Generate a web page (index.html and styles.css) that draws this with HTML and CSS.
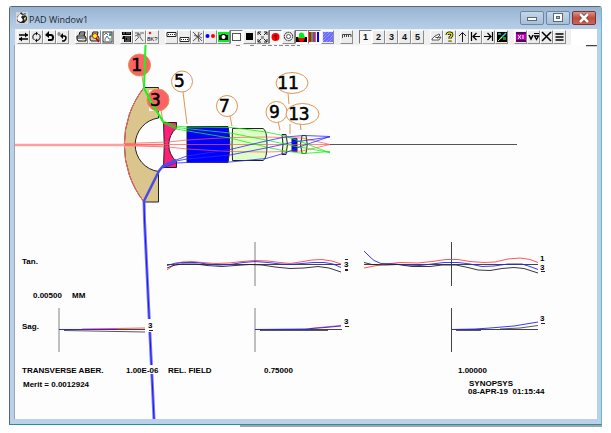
FILE: index.html
```html
<!DOCTYPE html>
<html lang="en">
<head>
<meta charset="utf-8">
<title>PAD Window1</title>
<link rel="stylesheet" href="styles.css">
</head>
<body>
<main class="window">
<header class="titlebar">
  <svg class="app-icon" viewBox="0 0 12 12" aria-hidden="true"><rect width="12" height="12" fill="#d4d4d4"/><path d="M1 5 4 2 5 0 7 2 10 1 9 3 11 5 11 8 8 11 4 11 1 9Z" fill="#222"/><path d="M1 6 4 2 7 3 5 5 7 8 5 10 2 9ZM7 3 9 2 8 4ZM8 6 10 5 9 9Z" fill="#fff"/></svg>
  <h1 class="title">PAD Window1</h1>
  <div class="controls">
    <button class="control" aria-label="Minimize"><svg viewBox="0 0 12 10"><rect x="1.500" y="4.500" width="9" height="3" fill="#fff" stroke="#59697a"/></svg></button>
    <button class="control" aria-label="Maximize"><svg viewBox="0 0 12 10"><rect x="1.500" y=".5" width="9" height="8" fill="#fff" stroke="#59697a"/><rect x="4.500" y="3.500" width="3" height="2" fill="#9bb5d0" stroke="#59697a"/></svg></button>
    <button class="control close" aria-label="Close"><svg viewBox="0 0 12 10"><path d="m2 1 8 8m0-8-8 8" stroke="#713b3b" stroke-width="4"/><path d="m2 1 8 8m0-8-8 8" stroke="#fff" stroke-width="2.500"/></svg></button>
  </div>
</header>
<nav class="toolbar" aria-label="Tools">
  <div class="group">
    <button class="tool" aria-label="Swap"><svg viewBox="0 0 11 12"><path d="M1 4h9M1 8h9" stroke="#000" stroke-width="1.500"/><path d="m7 1.500 3 2.500-3 2.500ZM4 5.500 1 8l3 2.500Z"/></svg></button>
    <button class="tool" aria-label="Refresh"><svg viewBox="0 0 11 12"><path d="M3.500 9A3.500 3.500 0 0 1 5 2.500M7.500 3A3.500 3.500 0 0 1 6 9.500" fill="none" stroke="#000"/><path d="m5 .5 2 2-2 2ZM6 7.500l-2 2 2 2Z"/></svg></button>
    <button class="tool" aria-label="Undo"><svg viewBox="0 0 11 12"><path d="M3 4h4q2 0 2 2.500T7 9H4" fill="none" stroke="#000" stroke-width="2"/><path d="M5 0v7L1 4Z"/></svg></button>
    <button class="tool" aria-label="Undo all"><svg viewBox="0 0 11 12"><path d="M5 5h2q2 0 2 2T7 10H5" fill="none" stroke="#000" stroke-width="1.500"/><path d="M6 2v6L3 5Z"/><ellipse cx="2" cy="3" rx="1" ry="1.500" fill="none" stroke="#333" stroke-width=".7"/></svg></button>
  </div>
  <div class="group">
    <button class="tool" aria-label="Print"><svg viewBox="0 0 11 12"><path d="m3 4 1-3h5L8 5M1 5h8l1 2v3H2L1 8Z" fill="#eee" stroke="#000"/><path d="M1 7h9M4 3h4" stroke="#222"/><path d="M6 9h2" stroke="#d8c800"/></svg></button>
    <button class="tool" aria-label="Print preview"><svg viewBox="0 0 11 12"><path d="m3 4 1-3h5L8 5M1 5h8l1 2v3H2L1 8Z" fill="#ccc" stroke="#222"/><circle cx="6" cy="5" r="2.500" fill="#ff0" stroke="#a00" stroke-width=".8"/><path d="m7 7 3 4" stroke="#b00" stroke-width="1.500"/></svg></button>
    <button class="tool" aria-label="Copy picture"><svg viewBox="0 0 11 12"><rect x="1" y="1" width="9" height="10" fill="#fff" stroke="#333"/><path d="m2 4 2-2 2 2M3 8l2-3 2 3M7 2h2v3M8 7v3M2 9h2" fill="none" stroke="#345" stroke-width=".8"/><path d="M7 3h2v2H7Z" fill="#299"/></svg></button>
  </div>
  <div class="group">
    <button class="tool" aria-label="Lens data"><svg viewBox="0 0 11 12"><path d="M1 1h9v3H1ZM2 5h8v6H3V8H1Z"/><path d="M2 2h2m1 0h4M4 6h5M4 8h1m1 0h3M4 10h5" stroke="#ccc" stroke-width=".7"/></svg></button>
    <button class="tool" aria-label="Ray fan"><svg viewBox="0 0 11 12"><path d="M1 2h4m1 0h4M4 2v4M1 5l5-2v3l3 4M1 10l4-4" fill="none" stroke="#444" stroke-width=".8"/></svg></button>
    <button class="tool" aria-label="Bitmap OK"><svg viewBox="0 0 11 12"><circle cx="3" cy="2" r="1.300" fill="#e22"/><text class="tiny" x="0" y="10">8K?</text></svg></button>
  </div>
  <div class="group">
    <button class="tool" aria-label="Top layout"><svg viewBox="0 0 11 12"><path d="M1 1.500h9v4H1ZM4 3.500h1m1 0h1m1 0h1M2 3.500h1" fill="#fff" stroke="#222"/></svg></button>
    <button class="tool" aria-label="Bottom layout"><svg viewBox="0 0 11 12"><path d="M1 6.500h9v4H1ZM4 8.500h1m1 0h1m1 0h1M2 8.500h1" fill="#fff" stroke="#222"/></svg></button>
    <button class="tool" aria-label="Trace rays"><svg viewBox="0 0 11 12"><path d="m1 1 9 9M1 10l9-8M2 4l4 2 1 5M7 1 6 5l4 2" fill="none" stroke="#333" stroke-width=".8"/></svg></button>
    <button class="tool" aria-label="Field points"><svg viewBox="0 0 11 12"><circle cx="2.500" cy="5" r="2" fill="#00f"/><circle cx="8" cy="5" r="2" fill="#f00"/></svg></button>
    <button class="tool" aria-label="Snapshot"><svg viewBox="0 0 11 12"><path fill="#0e2" d="M0 1h11v10H0z"/><path d="M1 4h2l1-1h3l1 1h2v5H1Z"/><circle cx="5.500" cy="6" r="2" fill="#fff"/></svg></button>
    <button class="tool pressed" aria-label="White background"><svg viewBox="0 0 11 12"><rect x="1.500" y="2.500" width="8" height="7" fill="#fff" stroke="#555"/></svg></button>
    <button class="tool" aria-label="Black background"><svg viewBox="0 0 11 12"><path d="M2 2h7v7H2z"/></svg></button>
    <button class="tool" aria-label="Zoom to fit"><svg viewBox="0 0 11 12"><path d="M1 4V1h3m3 0h3v3m0 4v3H7m-3 0H1V8M1 1l3 3m6-3L7 4m3 7L7 8m-6 3 3-3" fill="none" stroke="#222"/><path d="M4 5h3v3H4z" fill="#999"/></svg></button>
    <button class="tool pressed" aria-label="Number surfaces"><svg viewBox="0 0 11 12"><circle cx="5.500" cy="6" r="4" fill="#f00"/><path d="m4 5 2-1v5" fill="none" stroke="#400"/></svg></button>
    <button class="tool" aria-label="Aperture"><svg viewBox="0 0 11 12"><circle cx="5.500" cy="5.500" r="4.200" fill="#eee" stroke="#222" stroke-dasharray="2 .6"/><circle cx="5.500" cy="5.500" r="2" fill="#fff" stroke="#333" stroke-width=".8"/></svg></button>
    <button class="tool pressed" aria-label="Fill lenses"><svg viewBox="0 0 11 12"><path d="M0 6h11v5H0Z"/><path d="M3 6V4a2.500 2.500 0 0 1 5 0l1 2v1H2V6Z" fill="#0e1"/><path d="M2 7h7q-1 4-3.500 4T2 7Z" fill="#f00"/></svg></button>
    <button class="tool pressed" aria-label="Colors"><svg viewBox="0 0 11 12"><path fill="#f00" d="M0 1h2v10H0z"/><path fill="#0c2" d="M2 1h2v10H2z"/><path fill="#e0e" d="M4 1h2v10H4z"/><path fill="#883" d="M6 1h1v10H6z"/><path fill="#00f" d="M8 1h2v10H8z"/></svg></button>
    <button class="tool" aria-label="Spectrum"><svg viewBox="0 0 11 12"><path fill="#6d6bff" d="M1 1h10v10H1z"/><path d="m1 4 3-3m-3 6 6-6M1 10l9-9M4 11l7-7m-4 7 4-4" stroke="#b2b6ff" stroke-dasharray="1 .8"/></svg></button>
  </div>
  <div class="group">
    <button class="tool" aria-label="Ruler"><svg viewBox="0 0 11 12"><path d="M1.500 7V3.500H10V6M3.500 4v2m2-2v2m2-2v2" fill="none" stroke="#333" stroke-width=".9"/></svg></button>
  </div>
  <div class="group">
    <button class="tool pressed">1</button>
    <button class="tool">2</button>
    <button class="tool">3</button>
    <button class="tool">4</button>
    <button class="tool">5</button>
  </div>
  <div class="group">
    <button class="tool" aria-label="Edit"><svg viewBox="0 0 11 12"><path d="m1 8 3-3 4-2 1 1-3 3 4-1-2 3H1Zm3-2 3 1" fill="#fff" stroke="#333" stroke-width=".8"/></svg></button>
    <button class="tool" aria-label="Help"><svg viewBox="0 0 11 12"><path d="M3 4q0-2 2.500-2T8 4q0 1-2 2.500V8M6 9.500V11" fill="none" stroke="#000" stroke-width="2.800"/><path d="M3 4q0-2 2.500-2T8 4q0 1-2 2.500V8M6 9.500V11" fill="none" stroke="#ee0" stroke-width="1.300"/></svg></button>
    <button class="tool" aria-label="Up"><svg viewBox="0 0 11 12"><path d="M5.500 11V2M2 5l3.500-3.500L9 5" fill="none" stroke="#000" stroke-width=".9"/></svg></button>
    <button class="tool" aria-label="First"><svg viewBox="0 0 11 12"><path d="M1.500 1v9M3 5.500h7M6.500 2 3 5.500 6.500 9" fill="none" stroke="#000" stroke-width="1.200"/></svg></button>
    <button class="tool" aria-label="Last"><svg viewBox="0 0 11 12"><path d="M9.500 1v9M1 5.500h7M4.500 2 8 5.500 4.500 9" fill="none" stroke="#000" stroke-width="1.200"/></svg></button>
    <button class="tool" aria-label="Image analysis"><svg viewBox="0 0 11 12"><path d="M1 1h10v10H1z"/><path d="m4 8 6-6M2 3h3" fill="none" stroke="#0dc" stroke-width="1.500"/><path d="m2 10 4-4" stroke="#fd0"/><path d="M7 6h3v3H7z" fill="#282"/></svg></button>
  </div>
  <div class="group">
    <button class="tool" aria-label="XI view"><svg viewBox="0 0 11 12"><path fill="#b000b0" d="M1 1h10v10H1z"/><path d="M1 2h10M1 10h10" stroke="#000"/><path d="m3 4 3 4m0-4L3 8m5-4v4" stroke="#fff"/></svg></button>
    <button class="tool" aria-label="Variables"><svg viewBox="0 0 11 12"><path d="m1 4 2 4 2-4" fill="none" stroke="#000" stroke-width="1.500"/><path d="M6 2.500h5" stroke="#000"/><path d="m6.500 5 2 3.500 2-3.500Z" fill="none" stroke="#000" stroke-width="1.300"/></svg></button>
    <button class="tool" aria-label="Clear"><svg viewBox="0 0 11 12"><path d="m1 1 9 9m0-9-9 9" stroke="#000" stroke-width="1.500"/></svg></button>
    <button class="tool" aria-label="Menu"><svg viewBox="0 0 11 12"><path d="M1.500 3h8m-8 3h8m-8 3h8" stroke="#000" stroke-width="1.300"/></svg></button>
  </div>
</nav>
<section class="canvas">
<svg class="plot" viewBox="15 45 582 374" role="img" aria-label="Lens drawing and ray aberration plots">
  <path d="M586 45.500h11" stroke="#444" stroke-width="1.500"/>
  <path d="M236 45.500h4m10 0h4m8 0h4m2 0h4m2 0h3m2 0h4m2 0h4m2 0h4m2 0h3" stroke="#888"/>
  <!-- glass elements -->
  <g stroke="#222" stroke-width="1">
    <path d="M144 87.500h14.500V118A27 27 0 0 0 158.500 171.500V202H144A93 93 0 0 1 144 87.500Z" fill="#dac58c"/>
    <path d="M144 87.500A93 93 0 0 0 144 202" fill="none" stroke="#f66"/>
    <path d="M163.500 122.500h13V128A22 22 0 0 0 176.500 161.500V167.500h-13Q165 145 163.500 122.500Z" fill="#ff1e78"/>
    <path d="M187 126.500h41Q231.500 144 228 162.500h-41Z" fill="#00f"/>
    <path d="M232.500 128.500H263Q267 130 267 144.500T263 160.500H232.500Q231.500 144 232.500 128.500Z" fill="#e0ffc8"/>
    <path d="M282 134.500h4Q289 144 286 154.500h-4Q284 144 282 134.500Z" fill="#e0ffc8"/>
    <path d="M292 138.500h5v13h-5Z" fill="#00f"/>
    <path d="M302 135.500h4Q308.500 144 306 153.500h-4Q299 144 302 135.500Z" fill="#e0ffc8"/>
  </g>
  <path d="M330 144.500h187" stroke="#555"/>
  <rect x="149" y="90" width="9" height="21" fill="#fff"/>
  <!-- leader lines and balloons -->
  <g fill="#fff" stroke="#dc9653">
    <path d="m142 76 2 12m17 22 2 12m20-30 4 32m43-8 2 10m56-33 1 11m1 20v10m-12-13 2 9m20-8 1 8"/>
    <circle cx="139.500" cy="65" r="11" fill="#ff6262"/>
    <circle cx="158" cy="100" r="11" fill="#ff6262"/>
    <circle cx="182" cy="81.500" r="10.500"/>
    <circle cx="227" cy="106" r="10.500"/>
    <circle cx="276.500" cy="112" r="10.500"/>
    <ellipse cx="292" cy="83" rx="16" ry="10.500"/>
    <ellipse cx="302.500" cy="114" rx="16.500" ry="10.500"/>
  </g>
  <!-- axial rays -->
  <path d="M15 145h148" stroke="#ffa0a0" stroke-width="2.500"/>
  <g fill="none" stroke="#ff5252" stroke-width=".7">
    <path d="M125 144.500h205M125 143.500 168 142 187 140 230 137.500 266 137 302 138 330 144.500M125 145.500 168 147 187 149 230 151.500 266 152 302 151 330 144.500"/>
  </g>
  <!-- upper field rays -->
  <g fill="none" stroke="#16f016" stroke-width=".8">
    <path d="M144 88 163 121 176 126 187 127 232 127.500 266 132 285 136 302 142 330 153M144 88 163 122 176 127.500 230 133 266 140 294 146 330 152.500M144 88 163 123 176 129 230 138 266 147 285 151 304 153.500 330 151.500"/>
  </g>
  <path d="M145.500 45 144 88l8 16 11 17" fill="none" stroke="#20f020" stroke-width="2"/>
  <!-- lower field rays -->
  <g fill="none" stroke="#2929ff" stroke-width=".8">
    <path d="M163 168 176 163 187 162.500 230 162 266 158.500 285 153 302 146 330 136.500M163 167 176 161 187 159 230 155 266 148 294 142 330 137M163 166 176 160 187 156 230 149.500 266 141 285 137 304 135.500 330 136.500"/>
  </g>
  <path d="m144 201 .5 19L154 419" fill="none" stroke="#7676ff" stroke-width="3"/>
  <path d="m144 201 .5 19L154 419" fill="none" stroke="#1616ef" stroke-width="1"/>
  <path d="m144 201 15-30 4-5 13-6" fill="none" stroke="#4b4be8" stroke-width="2.500"/>
  <path d="M146 319h9v13h-9Zm0 46h14v9h-14Z" fill="#fdfdfd"/>
  <g class="balloon">
    <text x="131" y="71">1</text><text x="150" y="106">3</text><text x="174" y="87">5</text>
    <text x="219" y="112">7</text><text x="269" y="118">9</text><text x="277" y="89">11</text><text x="288" y="120">13</text>
  </g>
  <!-- plot axes -->
  <g stroke="#aaa" stroke-width="1.500"><path d="M59 308v44M255 242v44M255 308v44"/></g>
  <path d="M451.500 242v44m0 22v44M167 264.500h174M364 264.500h174M59 329.500h86m110 0h87m109.500 0H538" stroke="#444"/>
  <!-- tangential and sagittal fans -->
  <g fill="none" stroke-width=".9">
    <path d="M167 270 171 267 176 264 182 262 192 261.500 202 262.500 215 263.500 229 263 242 261.500 255 260.500 268 261 280 262.500 290 263.500 300 262 312 260 322 259.500 332 261 341 264" stroke="#f44"/>
    <path d="M167 265.500 176 263 185 262.500 196 262.500 207 264 218 265 230 264.500 243 262.500 255 261.500 268 262.500 280 264 290 264.500 302 263.500 314 262.500 324 262.500 333 264 341 267.500" stroke="#22f"/>
    <path d="M167 268 173 265.500 182 264 196 264 207 265.500 222 266.500 235 265.500 250 264.500 262 265 275 267 290 268.500 304 268 318 266.500 329 268 341 272" stroke="#222"/>
    <path d="M364 268 374 266 386 264 400 262.500 418 263 432 261.500 446 259.500 458 259.500 470 261.500 484 262.500 495 262 508 259 520 258 530 259.500 538 262.500" stroke="#f44"/>
    <path d="M364 251 369 256 374 260.500 381 263.500 394 264 406 265 420 265.500 432 264 444 262.500 458 262.500 470 264 482 266.500 494 266 508 264 522 264 530 266.500 538 269.500" stroke="#22f"/>
    <path d="M364 262.500 372 264.500 384 265 398 264.500 412 266.500 430 266.500 442 265 456 265 468 267.500 478 270 490 270.500 502 268.500 514 267.500 524 268.500 538 273" stroke="#222"/>
    <path d="m82 329 63-1M310 328.500 325 327 341 325.500" stroke="#f44"/>
    <path d="M64 330.500 145 332M260 330.500h68M456 330.500h25M500 329l20-1 18-2.500" stroke="#444"/>
    <path d="M59 329.500h58M255 329.500 305 329 325 327.500 341 326M451.500 329.500 475 329 490 328 514 326 538 322" stroke="#22f"/>
  </g>
  <g class="label">
    <text x="22" y="264">Tan.</text><text x="33" y="298">0.00500</text><text x="72" y="298">MM</text><text x="22" y="329">Sag.</text>
    <text x="22" y="373">TRANSVERSE ABER.</text><text x="126" y="373">1.00E-06</text><text x="168" y="373">REL. FIELD</text>
    <text x="264" y="373">0.75000</text><text x="458" y="373">1.00000</text><text x="23" y="387">Merit = 0.0012924</text>
    <text x="469" y="386">SYNOPSYS</text><text x="468" y="394">08-APR-19&#160; 01:15:44</text>
    <text x="540" y="261">1</text><text x="540" y="270">3</text><text x="344" y="267">3</text><text x="148" y="328">3</text><text x="344" y="324">3</text><text x="540" y="321">3</text>
  </g>
  <path d="M345 259.500h3m-3 10h3m-3 1h3M541 271.500h4M149 330.500h4M345 326.500h4M541 323.500h4" stroke="#222"/>
</svg>
</section>
</main>
<div class="backdrop"></div>
</body>
</html>
```
FILE: styles.css
```css
* { box-sizing: border-box; }

body {
  margin: 0;
  min-height: 100vh;
  display: flex;
  flex-direction: column;
  padding: 6px 9px;
  background: #fff;
  font-family: "Liberation Sans", Arial, sans-serif;
}

.window {
  flex: 1;
  min-width: 0;
  display: flex;
  flex-direction: column;
  padding: 0 4px 5px 5px;
  border: 1px solid #596775;
  border-right-color: #65b6dc;
  border-bottom-color: #258f9e;
  border-radius: 3px 3px 0 0;
  background: #b9d1ea;
}

.backdrop {
  height: 2px;
  margin-left: 231px;
  background: #a3a3a3;
}

.titlebar {
  display: flex;
  align-items: center;
  height: 22px;
  margin: 0 -4px 0 -5px;
  padding-left: 6px;
  background: linear-gradient(#99b4d1, #b7cee8);
}

.app-icon { width: 12px; height: 12px; }

.title {
  flex: 1;
  margin: 2px 0 0 1px;
  color: #1d2935;
  font: 9px "Open Sans", sans-serif;
}

.controls {
  display: flex;
  align-items: center;
  gap: 2px;
  padding-right: 5px;
}

.control {
  width: 24px;
  height: 14px;
  padding: 0;
  display: grid;
  place-items: center;
  border: 1px solid #71869d;
  border-radius: 2px;
  background: linear-gradient(#c4d6e9, #a6bfda);
}

.control svg { width: 12px; height: 10px; }

.close {
  border-color: #7a3434;
  background: linear-gradient(#dc9388, #c34b3b 50%, #cc6657);
}

.toolbar {
  display: flex;
  align-items: center;
  gap: 6px;
  height: 16px;
  padding: 0 2px;
  background: linear-gradient(to right, #f0f0f0 556px, #fff 556px);
}

.group { display: flex; }

.tool {
  width: 13px;
  height: 14px;
  padding: 0;
  display: grid;
  place-items: center;
  border: 1px solid;
  border-color: #fff #8c8c8c #8c8c8c #fff;
  background: #ececec;
  color: #111;
  font: bold 9px "Liberation Sans", Arial, sans-serif;
}

.tool svg { display: block; width: 11px; height: 12px; }

.tiny { font: 6px "Liberation Sans", Arial, sans-serif; }

.pressed {
  border-color: #777 #fff #fff #777;
  background: #f8f8f8;
}

.canvas {
  flex: 1;
  border-left: 1px solid #9aa5b0;
  margin-left: -1px;
  background: #fdfdfd;
}

.plot { display: block; width: 100%; }

.balloon { font: 18px "DejaVu Sans Mono", monospace; stroke: #000; stroke-width: 0.5; }

.label { font: bold 8px "Liberation Sans", Arial, sans-serif; }
```
